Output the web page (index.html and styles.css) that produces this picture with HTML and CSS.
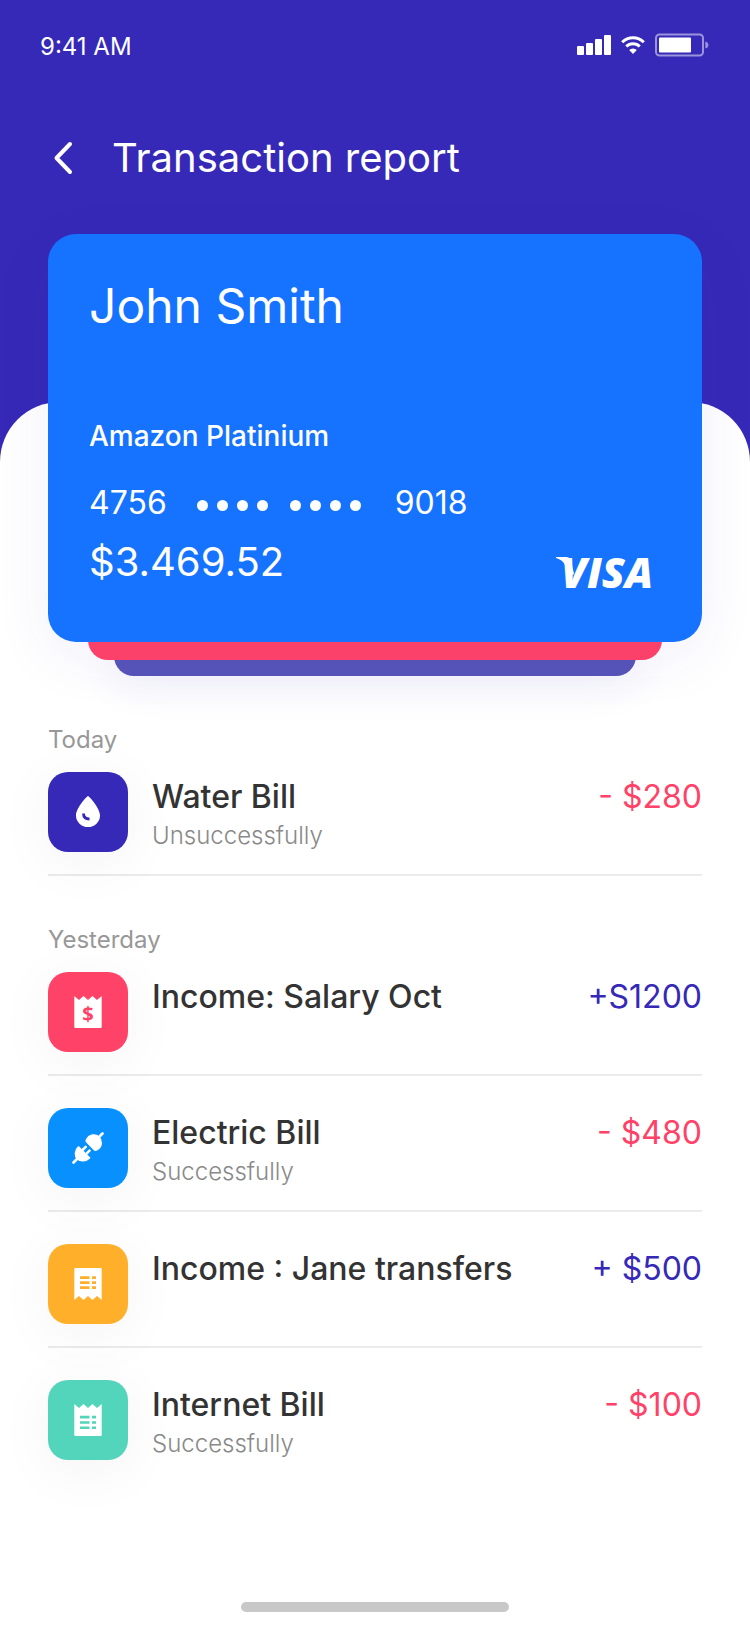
FILE: index.html
```html
<!DOCTYPE html>
<html lang="en">
<head>
<meta charset="utf-8">
<meta name="viewport" content="width=device-width, initial-scale=1">
<title>Transaction report</title>
<link rel="stylesheet" href="styles.css">
</head>
<body>
<div class="screen">
  <header class="header">
    <div class="status">
      <time class="status-time">9:41 AM</time>
      <div class="status-icons">
        <svg width="34" height="22" viewBox="0 0 34 22" fill="#fff" aria-hidden="true">
          <rect x="0" y="12" width="7" height="9" rx="1"/><rect x="9" y="9" width="7" height="12" rx="1"/><rect x="18" y="5" width="7" height="16" rx="1"/><rect x="27" y="1" width="7" height="20" rx="1"/>
        </svg>
        <svg width="24" height="22" viewBox="0 0 24 22" fill="none" stroke="#fff" stroke-width="3" aria-hidden="true">
          <path d="M1.200 8.200A15.300 15.300 0 0 1 22.800 8.200M5.300 12.500A9.500 9.500 0 0 1 18.700 12.500"/>
          <path d="M12 20L8.200 16.100A5.400 5.400 0 0 1 15.800 16.100Z" fill="#fff" stroke="none"/>
        </svg>
        <svg width="54" height="24" viewBox="0 0 54 24" fill="#fff" aria-hidden="true">
          <rect x="1" y="1.500" width="47" height="21" rx="3.500" fill="none" stroke="#fff" stroke-opacity=".5" stroke-width="2"/>
          <rect x="4" y="4.500" width="32" height="15" rx="1"/>
          <path d="M50.300 8.500C54.500 9.500 54.500 14.500 50.300 15.500Z" opacity=".5"/>
        </svg>
      </div>
    </div>
    <div class="titlebar">
      <button class="back" type="button" aria-label="Back">
        <svg width="20" height="34" viewBox="0 0 20 34" fill="none" stroke="#fff" stroke-width="4" stroke-linecap="round" stroke-linejoin="round" aria-hidden="true"><path d="M17 3L3.500 17L17 31"/></svg>
      </button>
      <h1 class="title">Transaction report</h1>
    </div>
  </header>

  <main class="sheet">
    <section class="stack" aria-label="Card">
      <div class="card">
        <p class="card-name">John Smith</p>
        <p class="card-type">Amazon Platinium</p>
        <div class="card-number">
          <span>4756</span>
          <span class="masks">
            <span class="dots"><i></i><i></i><i></i><i></i></span>
            <span class="dots"><i></i><i></i><i></i><i></i></span>
          </span>
          <span>9018</span>
        </div>
        <div class="card-foot">
          <p class="card-balance">$3.469.52</p>
          <svg class="visa" width="94" height="34" viewBox="0 0 94 34" fill="#fff" aria-label="Visa">
            <path d="M0 1H10Q14 1 15 5L18 18L14 20L9 9Q7 4 0 2Z"/>
            <text class="visa-text" x="5" y="32">VISA</text>
          </svg>
        </div>
      </div>
      <div class="under under-red"></div>
      <div class="under under-purple"></div>
    </section>

    <section class="group">
      <h2 class="day">Today</h2>
      <ul class="list">
        <li class="item">
          <span class="tile tile-purple">
            <svg width="32" height="32" viewBox="0 0 32 32" aria-hidden="true"><path fill="#fff" d="M16 0C17 0 28 12 28 19.500A12 11.500 0 0 1 4 19.500C4 12 15 0 16 0Z"/><path d="M11.500 17.500Q11.500 23 17.500 23" fill="none" stroke="#3629b7" stroke-width="2.800"/></svg>
          </span>
          <div class="info"><h3 class="name">Water Bill</h3><p class="state">Unsuccessfully</p></div>
          <span class="amount minus">- $280</span>
        </li>
      </ul>
    </section>

    <section class="group">
      <h2 class="day">Yesterday</h2>
      <ul class="list">
        <li class="item">
          <span class="tile tile-red">
            <svg width="32" height="32" viewBox="0 0 32 32" aria-hidden="true"><path fill="#fff" d="M2.300 0L7 4L11.500 0L16 4L20.500 0L25 4L29.700 0V31Q29.700 32 28.700 32H3.300Q2.300 32 2.300 31Z"/><text class="dollar" x="16" y="24.500">$</text></svg>
          </span>
          <div class="info"><h3 class="name">Income: Salary Oct</h3></div>
          <span class="amount plus">+S1200</span>
        </li>
        <li class="item">
          <span class="tile tile-blue">
            <svg width="32" height="32" viewBox="0 0 32 32" aria-hidden="true"><path fill="#fff" d="M13.500 8.300C15 4.500 18 2.300 21.500 2.300Q25 2.300 27.500 4.500Q30 7 30 11C30 14.500 28 17.500 24.500 18.800Q23 19.200 21.800 18.200L14 10.300Q13.300 9.500 13.500 8.300ZM7.200 14.500L18 25.200Q18.700 26 17.700 26.700A9.800 9.800 0 0 1 4.500 27.300A9.700 9.700 0 0 1 5.800 14.600Q6.500 14 7.200 14.500Z"/><path d="M27 5L30.500 1.500M1.500 30.500L5.500 26.500M10 18.500L13.700 14.800M13.800 22.300L17.500 18.600" stroke="#fff" stroke-width="2.600" stroke-linecap="round"/></svg>
          </span>
          <div class="info"><h3 class="name">Electric Bill</h3><p class="state">Successfully</p></div>
          <span class="amount minus">- $480</span>
        </li>
        <li class="item">
          <span class="tile tile-orange">
            <svg width="32" height="32" viewBox="0 0 32 32" aria-hidden="true"><path fill="#fff" fill-rule="evenodd" d="M2.300 32L7 28L11.500 32L16 28L20.500 32L25 28L29.700 32V1Q29.700 0 28.700 0H3.300Q2.300 0 2.300 1ZM8 8.300H17.500V11H8ZM20 8.300H24V11H20ZM8 13.300H17.500V16H8ZM20 13.300H24V16H20ZM8 18.300H17.500V21H8ZM20 18.300H24V21H20Z"/></svg>
          </span>
          <div class="info"><h3 class="name">Income : Jane transfers</h3></div>
          <span class="amount plus">+ $500</span>
        </li>
        <li class="item">
          <span class="tile tile-teal">
            <svg width="32" height="32" viewBox="0 0 32 32" aria-hidden="true"><path fill="#fff" fill-rule="evenodd" d="M2.300 0L7 4L11.500 0L16 4L20.500 0L25 4L29.700 0V31Q29.700 32 28.700 32H3.300Q2.300 32 2.300 31ZM8 11.800H17.500V14.500H8ZM20 11.800H24V14.500H20ZM8 17.200H17.500V19.800H8ZM20 17.200H24V19.800H20ZM8 22.500H17.500V25H8ZM20 22.500H24V25H20Z"/></svg>
          </span>
          <div class="info"><h3 class="name">Internet Bill</h3><p class="state">Successfully</p></div>
          <span class="amount minus">- $100</span>
        </li>
      </ul>
    </section>
    <div class="home"></div>
  </main>
</div>
</body>
</html>
```
FILE: styles.css
```css
* { box-sizing: border-box; margin: 0; padding: 0; }

body {
  background: #3629b7;
  color: #333;
  font-family: Inter, "Liberation Sans", sans-serif;
}

.screen {
  display: flex;
  flex-direction: column;
  min-height: 100vh;
}

/* Header */
.header { color: #fff; padding: 31px 41px 220px 40px; }
.status { display: flex; align-items: center; justify-content: space-between; }
.status-time { font-size: 24px; line-height: 32px; font-weight: 400; }
.status-icons { display: flex; align-items: center; gap: 10px; padding-bottom: 4px; }
.status-icons svg { display: block; }

.titlebar { display: flex; align-items: center; gap: 39px; margin-top: 71px; padding-left: 13px; }
.back { display: block; border: 0; background: none; cursor: pointer; }
.back svg { display: block; }
.title { font-size: 40px; line-height: 48px; font-weight: 400; }

/* White sheet */
.sheet {
  flex: 1;
  display: flex;
  flex-direction: column;
  background: #fff;
  border-radius: 60px 60px 0 0;
  padding: 0 48px 18px;
}

/* Card stack */
.stack { position: relative; margin-top: -168px; }
.stack::before {
  content: "";
  position: absolute;
  inset: 0 0 34px;
  border-radius: 28px;
  box-shadow: 0 16px 60px rgba(54, 41, 183, .07);
}
.card {
  position: relative;
  z-index: 2;
  color: #fff;
  background: #1573ff;
  border-radius: 28px;
  padding: 44px 52px 52px 41px;
}
.card-name { font-size: 48px; line-height: 56px; font-weight: 400; }
.card-type { margin-top: 84px; font-size: 28px; line-height: 36px; font-weight: 500; }
.card-number {
  display: flex;
  align-items: center;
  margin-top: 29px;
  font-size: 32px;
  line-height: 40px;
  font-weight: 400;
}
.masks, .dots { display: flex; }
.masks { gap: 22px; margin: 0 34px 0 30px; padding-top: 4px; }
.dots { gap: 9px; }
.dots i { width: 11px; height: 11px; border-radius: 50%; background: #fff; }
.card-foot { display: flex; justify-content: space-between; margin-top: 15px; height: 52px; }
.card-balance { font-size: 40px; line-height: 48px; font-weight: 400; }
.visa { align-self: flex-end; overflow: visible; }
.visa-text { font-family: "Open Sans", sans-serif; font-size: 42px; font-weight: 800; font-style: italic; }

.under { position: relative; height: 38px; margin-top: -20px; border-radius: 0 0 20px 20px; }
.under-red { z-index: 1; margin-left: 40px; margin-right: 40px; background: #fb4169; }
.under-purple { height: 36px; margin-left: 66px; margin-right: 66px; background: #5552b8; box-shadow: 0 10px 40px rgba(54, 41, 183, .08); }

/* Transactions */
.group { margin-top: 48px; }
.day { margin-bottom: 16px; font-size: 24px; line-height: 32px; font-weight: 400; color: #989898; }
.list { list-style: none; }
.item { display: flex; gap: 24px; padding-bottom: 22px; border-bottom: 2px solid #ebebeb; }
.item + .item { padding-top: 32px; }
.item:last-child:not(:first-child) { padding-bottom: 0; border-bottom: 0; }

.tile {
  display: grid;
  place-items: center;
  flex: none;
  width: 80px;
  height: 80px;
  border-radius: 20px;
  box-shadow: 0 10px 60px rgba(0, 0, 0, .05);
}
.tile-purple { background: #3629b7; }
.tile-red { background: #ff4267; }
.tile-blue { background: #0890fe; }
.tile-orange { background: #ffaf2a; }
.tile-teal { background: #52d5ba; }
.dollar { font-family: "Noto Sans", sans-serif; font-size: 20px; font-weight: 700; fill: #ff4267; text-anchor: middle; }

.info { flex: 1; display: flex; flex-direction: column; gap: 3px; padding-top: 5px; }
.name { font-size: 32px; line-height: 40px; font-weight: 500; }
.state { font-size: 24px; line-height: 32px; font-weight: 300; color: #898989; }
.amount { padding-top: 5px; font-size: 32px; line-height: 40px; font-weight: 400; }
.minus { color: #ff4267; }
.plus { color: #3629b7; }

.home { width: 268px; height: 10px; margin: auto auto 0; border-radius: 5px; background: #c8c8c8; }
```
